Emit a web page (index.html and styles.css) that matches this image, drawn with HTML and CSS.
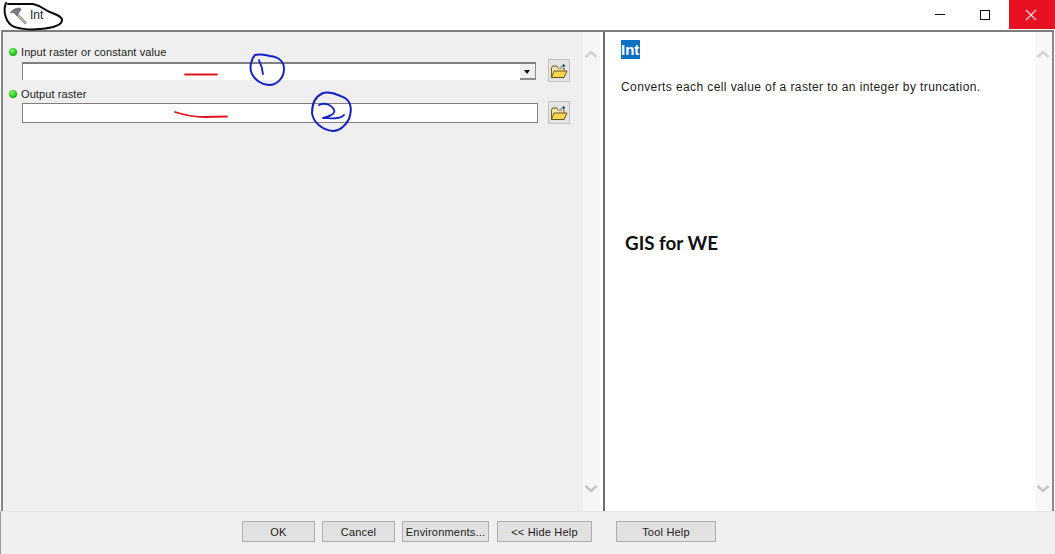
FILE: index.html
```html
<!DOCTYPE html>
<html lang="en">
<head>
<meta charset="utf-8">
<title>Int</title>
<link rel="stylesheet" href="styles.css">
</head>
<body>
<div class="window">
  <header class="titlebar">
    <svg class="tool-icon" width="20" height="20" viewBox="0 0 20 20">
      <path d="M8 8.5 L18 18.5" stroke="#8f8f86" stroke-width="2.6" fill="none"/>
      <path d="M8 8.5 L18 18.5" stroke="#d8d2b8" stroke-width="1" fill="none"/>
      <path d="M2.5 8 Q5 3 12 3 L13 4.5 L9 10.5 L7 8.5 Q5 7 2.5 8 Z" fill="#77797c" stroke="#55575a" stroke-width=".6"/>
    </svg>
    <span class="title">Int</span>
    <div class="win-controls">
      <span class="win-btn"><i class="min"></i></span>
      <span class="win-btn"><i class="max"></i></span>
      <span class="win-btn close">
        <svg width="12" height="12" viewBox="0 0 12 12"><path d="M1 1 L11 11 M11 1 L1 11" stroke="#fbdcdc" stroke-width="1.2"/></svg>
      </span>
    </div>
  </header>

  <main class="body">
    <section class="form-pane">
      <div class="form">
        <div class="field">
          <label class="label"><i class="dot"></i>Input raster or constant value</label>
          <div class="row">
            <div class="input combo"><span class="arrow"></span></div>
            <button class="browse" type="button" aria-label="Browse">
              <svg width="18" height="17" viewBox="0 0 18 17"><use href="#folder"/></svg>
            </button>
          </div>
        </div>
        <div class="field">
          <label class="label"><i class="dot"></i>Output raster</label>
          <div class="row">
            <div class="input text"></div>
            <button class="browse" type="button" aria-label="Browse">
              <svg width="18" height="17" viewBox="0 0 18 17"><use href="#folder"/></svg>
            </button>
          </div>
        </div>
      </div>
      <div class="scrollbar">
        <svg width="14" height="8" viewBox="0 0 14 8"><path d="M1.5 7 L7 2 L12.5 7" fill="none" stroke="#d2d2d2" stroke-width="2.4"/></svg>
        <svg width="14" height="8" viewBox="0 0 14 8"><path d="M1.5 1 L7 6 L12.5 1" fill="none" stroke="#c4c4c4" stroke-width="2.4"/></svg>
      </div>
    </section>

    <section class="help-pane">
      <div class="help">
        <h1 class="help-title">Int</h1>
        <p class="help-text">Converts each cell value of a raster to an integer by truncation.</p>
        <p class="watermark">GIS for WE</p>
      </div>
      <div class="scrollbar light">
        <svg width="14" height="8" viewBox="0 0 14 8"><path d="M1.5 7 L7 2 L12.5 7" fill="none" stroke="#d2d2d2" stroke-width="2.4"/></svg>
        <svg width="14" height="8" viewBox="0 0 14 8"><path d="M1.5 1 L7 6 L12.5 1" fill="none" stroke="#c4c4c4" stroke-width="2.4"/></svg>
      </div>
    </section>
  </main>

  <footer class="footer">
    <button class="btn ok" type="button">OK</button>
    <button class="btn cancel" type="button">Cancel</button>
    <button class="btn env" type="button">Environments...</button>
    <button class="btn hide" type="button">&lt;&lt; Hide Help</button>
    <button class="btn tool" type="button">Tool Help</button>
  </footer>
</div>

<svg class="defs" width="0" height="0">
  <defs>
    <g id="folder">
      <path d="M1.5 6 V15.5 H14 V6 H8 L7 4 H2.5 Z" fill="#efe3a8" stroke="#5e4e1a" stroke-width=".9"/>
      <path d="M1.5 15.5 L4 9 H17 L14 15.5 Z" fill="#f7d64e" stroke="#5e4e1a" stroke-width=".9"/>
      <path d="M7.5 6.5 Q9 2.8 12 2.8 V0.5 L16.8 3.8 L12 7 V4.9 Q9.5 4.9 7.5 6.5 Z" fill="#fff"/>
      <path d="M8.6 5.6 Q10 3.4 12.7 3.4 V1.6 L15.8 3.8 L12.7 6 V4.3 Q10.4 4.3 8.6 5.6 Z" fill="#23496e"/>
    </g>
  </defs>
</svg>

<svg class="ink" width="1055" height="554" viewBox="0 0 1055 554" aria-hidden="true">
  <path class="black" d="M6 3 C3 10 5 20 11 25 C16 29 30 30 40 29 C52 28 62 26 62 20 C62 15 52 14 46 10 C42 7 38 5 33 4 L8 4"/>
  <path class="blue" d="M255 55 C251 59 249 68 252 74 C255 80 262 85 269 85 C277 85 284 78 284 69 C284 62 279 57 270 56 C265 55 259 54 255 55 Z"/>
  <path class="blue thin" d="M259 60 C260 64 262 66 262 69 L263 74"/>
  <path class="blue" d="M323 93 C316 96 312 103 312 113 C313 122 322 130 333 131 C340 131 346 125 349 119 C352 110 351 102 345 98 C338 95 330 91 323 93 Z"/>
  <path class="blue thin" d="M319 105 C325 102 332 105 334 110 C336 114 328 117 323 118 C330 118 340 120 344 115"/>
  <path class="red" d="M185 74.5 H217"/>
  <path class="red" d="M175 112 C184 115 194 117 205 117 L227 116.5"/>
</svg>
</body>
</html>
```
FILE: styles.css
```css
* { box-sizing: border-box; }
html, body { margin: 0; padding: 0; }
body {
  width: 1055px;
  height: 554px;
  overflow: hidden;
  background: #fff;
  font-family: "Liberation Sans", Arial, sans-serif;
  color: #1c1c1c;
}
.window {
  display: flex;
  flex-direction: column;
  height: 554px;
}
.titlebar {
  display: flex;
  align-items: center;
  flex: 0 0 30px;
  height: 30px;
  padding-left: 8px;
  background: #fff;
}
.tool-icon { flex: none; }
.title {
  margin-left: 2px;
  font-size: 12px;
}
.win-controls {
  display: flex;
  align-self: flex-start;
  margin-left: auto;
}
.win-btn {
  display: flex;
  align-items: center;
  justify-content: center;
  width: 46px;
  height: 29px;
}
.win-btn .min { display: block; width: 10px; height: 1px; background: #111; }
.win-btn .max { display: block; width: 10px; height: 10px; margin-right: 2px; border: 1px solid #111; }
.win-btn.close { background: #e81123; }
.win-btn.close svg { margin-right: 2px; }

.body {
  display: flex;
  flex: 1 1 auto;
  min-height: 0;
  border-top: 2px solid #7d7d7d;
  margin-left: 1px;
  margin-right: 1px;
}
.form-pane {
  display: flex;
  flex: 0 0 599px;
  background: #efefef;
  border-left: 2px solid #858585;
}
.form {
  flex: 1 1 auto;
  padding: 12px 13px 0 4px;
}
.field { margin-bottom: 4px; }
.label {
  display: flex;
  align-items: center;
  height: 16px;
  font-size: 11px;
  letter-spacing: .1px;
}
.dot {
  width: 8px;
  height: 8px;
  margin: 0 4px 0 2px;
  border-radius: 50%;
  background: radial-gradient(circle at 40% 35%, #7dff5a, #14b414 70%);
}
.row {
  display: flex;
  align-items: flex-start;
  justify-content: space-between;
  height: 22px;
  padding-left: 15px;
}
.input { background: #fff; }
.input.combo {
  position: relative;
  width: 514px;
  height: 18px;
  margin-top: 2px;
  border-top: 2px solid #7f7f7f;
  border-left: 1px solid #7f7f7f;
}
.arrow {
  position: absolute;
  right: 0;
  top: 0;
  width: 16px;
  height: 16px;
  background: #efefef;
  border-right: 1px solid #8c8c8c;
  border-bottom: 2px solid #8c8c8c;
}
.arrow::after {
  content: "";
  position: absolute;
  left: 4px;
  top: 6px;
  border-left: 3.5px solid transparent;
  border-right: 3.5px solid transparent;
  border-top: 4px solid #111;
}
.input.text {
  width: 516px;
  height: 20px;
  margin-top: 1px;
  border: 1px solid #7f7f7f;
}
.browse {
  display: flex;
  align-items: center;
  justify-content: center;
  flex: none;
  width: 22px;
  height: 23px;
  padding: 0;
  margin: -1px 0 0;
  background: #e3e3e3;
  border: 1px solid #c2c2c2;
}
.scrollbar {
  display: flex;
  flex-direction: column;
  align-items: center;
  justify-content: space-between;
  flex: 0 0 17px;
  padding: 18px 2px 18px 0;
  background: #f6f6f6;
}
.scrollbar.light { background: #f8f8f8; }

.help-pane {
  display: flex;
  flex: 1 1 auto;
  margin-left: 3px;
  background: #fff;
  border-left: 2px solid #6f6f6f;
  border-right: 2px solid #8a8a8a;
}
.help {
  flex: 1 1 auto;
  padding: 8px 0 0 16px;
}
.help-title {
  display: block;
  margin: 0;
  padding: 0;
  height: 19px;
  width: 19px;
  overflow: hidden;
  font-size: 15px;
  line-height: 19px;
  font-weight: 700;
  color: #fff;
  background: #0b6fc2;
}
.help-text {
  margin: 19px 0 0;
  font-size: 12px;
  line-height: 18px;
  letter-spacing: .4px;
}
.watermark {
  margin: 136px 0 0 4px;
  font-family: Lato, sans-serif;
  font-size: 18.8px;
  line-height: 22px;
  font-weight: 700;
  color: #111;
}

.footer {
  display: flex;
  align-items: flex-start;
  flex: 0 0 43px;
  padding: 9px 0 0 241px;
  background: #f0f0f0;
  border-top: 1px solid #e6e6e6;
  border-left: 1px solid #9a9a9a;
}
.btn {
  height: 21px;
  padding: 0;
  font-family: "Liberation Sans", Arial, sans-serif;
  font-size: 11px;
  letter-spacing: .2px;
  color: #222;
  background: #e1e1e1;
  border: 1px solid #adadad;
}
.ok { width: 73px; }
.cancel { width: 73px; margin-left: 7px; }
.env { width: 87px; margin-left: 7px; }
.hide { width: 95px; margin-left: 8px; }
.tool { width: 100px; margin-left: 24px; }

.defs { position: absolute; }
.ink {
  position: absolute;
  left: 0;
  top: 0;
  pointer-events: none;
}
.ink path { fill: none; stroke-linecap: round; stroke-linejoin: round; }
.ink .black { stroke: #0a0a0a; stroke-width: 2; }
.ink .blue { stroke: #1420c8; stroke-width: 2; }
.ink .blue.thin { stroke-width: 1.8; }
.ink .red { stroke: #e0141c; stroke-width: 1.8; }
```
